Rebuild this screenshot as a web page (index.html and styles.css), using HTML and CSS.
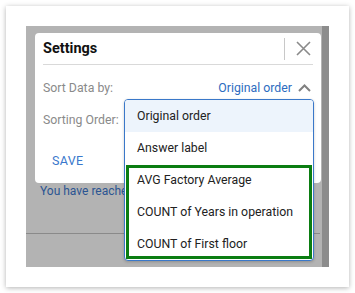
FILE: index.html
```html
<!DOCTYPE html>
<html lang="en">

<head>
  <meta charset="UTF-8">
  <meta name="viewport" content="width=device-width, initial-scale=1.0">
  <title>Settings</title>
  <link rel="stylesheet" href="styles.css">
</head>

<body>

  <div class="frame">
    <div class="backdrop">
      <div class="viewport">

        <!-- Settings dialog -->
        <div class="dialog">
          <div class="dialog-header">
            <h2>Settings</h2>
            <span class="header-divider"></span>
            <button class="close-btn" aria-label="Close">
              <svg width="15" height="15" viewBox="0 0 15 15">
                <path d="M1 1 L14 14 M14 1 L1 14" stroke="#8a8a8a" stroke-width="1.6" fill="none" />
              </svg>
            </button>
          </div>
          <div class="dialog-body">
            <div class="setting-row">
              <span class="setting-label">Sort Data by:</span>
              <span class="setting-value">Original order
                <svg width="13" height="8" viewBox="0 0 13 8">
                  <path d="M1 7 L6.5 1.5 L12 7" stroke="#808080" stroke-width="2" fill="none" />
                </svg>
              </span>
            </div>
            <div class="setting-row">
              <span class="setting-label">Sorting Order:</span>
            </div>
            <button class="save-btn">SAVE</button>
          </div>
        </div>

        <p class="notice">You have reached the limit of sort fields allowed</p>
        <div class="footer-line"></div>

        <!-- Sort options menu -->
        <div class="dropdown">
          <div class="dropdown-item active">Original order</div>
          <div class="dropdown-item">Answer label</div>
          <div class="dropdown-group">
            <div class="dropdown-item">AVG Factory Average</div>
            <div class="dropdown-item">COUNT of Years in operation</div>
            <div class="dropdown-item">COUNT of First floor</div>
          </div>
        </div>

      </div>
      <div class="scrollbar"></div>
    </div>
  </div>

</body>

</html>
```

FILE: styles.css
```css
* {
  margin: 0;
  padding: 0;
  box-sizing: border-box;
  font-family: Roboto, "Liberation Sans", Arial, sans-serif;
}

body {
  background-color: #fff;
}

.frame {
  width: 343px;
  height: 281px;
  margin: 6px;
  padding: 20px;
  background-color: #fff;
  box-shadow: 0 1px 5px rgba(0, 0, 0, 0.3);
}

.backdrop {
  display: flex;
  width: 303px;
  height: 241px;
  background-color: #b3b3b3;
}

.viewport {
  position: relative;
  flex-grow: 1;
  padding-top: 7px;
  overflow: hidden;
}

.scrollbar {
  width: 7px;
  background-color: #8c8c8c;
}

/* Dialog */
.dialog {
  margin-left: 9px;
  margin-right: 1px;
  height: 150px;
  background-color: #fff;
  border-radius: 4px;
}

.dialog-header {
  display: flex;
  align-items: center;
  height: 32px;
  margin: 0 8px;
  border-bottom: 1px solid #d9d9d9;
}

.dialog-header h2 {
  flex-grow: 1;
  font-size: 14.5px;
  font-weight: 700;
  color: #111;
}

.header-divider {
  width: 1px;
  height: 22px;
  background-color: #c8c8c8;
}

.close-btn {
  display: flex;
  margin-left: 11px;
  margin-right: 2px;
  border: none;
  background: none;
}

.dialog-body {
  padding: 7px 8px 7px 8px;
}

.setting-row {
  display: flex;
  align-items: center;
  justify-content: space-between;
  height: 32px;
}

.setting-label {
  font-size: 12.3px;
  color: #8a8a8a;
}

.setting-value {
  display: flex;
  align-items: center;
  gap: 6px;
  font-size: 12.3px;
  color: #2d6cc0;
  margin-right: 2px;
}

.save-btn {
  margin-top: 8px;
  height: 32px;
  padding: 0 9px;
  border: none;
  background: none;
  font-size: 12.5px;
  letter-spacing: 0.3px;
  color: #3a78cc;
}

.notice {
  margin-left: 14px;
  height: 17px;
  line-height: 17px;
  font-size: 12px;
  color: #2b5592;
  white-space: nowrap;
}

.footer-line {
  margin-top: 33px;
  margin-right: 2px;
  border-top: 1px solid #8a8a8a;
}

/* Dropdown menu */
.dropdown {
  position: absolute;
  left: 98px;
  top: 73px;
  width: 190px;
  background-color: #fff;
  border: 1px solid #3a78c9;
  border-radius: 4px;
  box-shadow: 0 1px 3px rgba(0, 0, 0, 0.2);
  overflow: hidden;
}

.dropdown-item {
  height: 32px;
  line-height: 32px;
  padding-left: 12px;
  font-size: 12.3px;
  color: #222;
  white-space: nowrap;
}

.dropdown-item.active {
  background-color: #edf4fc;
}

.dropdown-group {
  outline: 3px solid #0b7d12;
  outline-offset: -4px;
}
```
